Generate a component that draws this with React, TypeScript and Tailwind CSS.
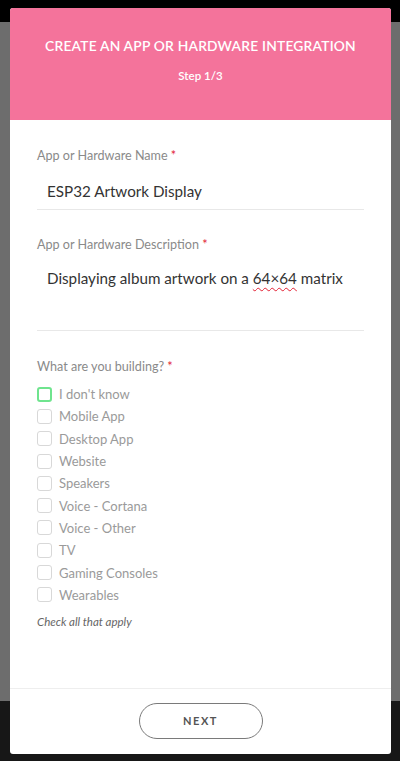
import React from "react";

const OPTIONS = [
  "I don't know",
  "Mobile App",
  "Desktop App",
  "Website",
  "Speakers",
  "Voice - Cortana",
  "Voice - Other",
  "TV",
  "Gaming Consoles",
  "Wearables",
];

function Label({ children }: { children: React.ReactNode }) {
  return (
    <div className="text-[12.6px] leading-[16px] text-[#8a8a8a]">
      {children} <span className="text-[#e22134]">*</span>
    </div>
  );
}

export default function App() {
  return (
    <div
      className="relative h-[761px] w-[400px] overflow-hidden bg-[#171717]"
      style={{ fontFamily: "Lato, 'Noto Sans', sans-serif" }}
    >
      {/* page behind the modal */}
      <div className="h-[22px] bg-black" />
      <div className="h-[679px] bg-[#6d6d6d]" />

      {/* modal */}
      <div className="absolute left-[10px] top-[8px] flex h-[746px] w-[381px] flex-col overflow-hidden rounded-[3px] bg-white">
        <div className="flex h-[112px] flex-col items-center bg-[#f4739b] pt-[30px] text-white">
          <h1 className="text-[13.8px] font-semibold leading-[16px] tracking-[0.2px]">
            CREATE AN APP OR HARDWARE INTEGRATION
          </h1>
          <p className="mt-[15px] text-[11.5px] font-semibold leading-[14px]">Step 1/3</p>
        </div>

        <div className="flex-1 px-[27px] pt-[28px]">
          <Label>App or Hardware Name</Label>
          <div className="mt-[17px] border-b border-[#e8e8e8] pb-[8px] pl-[10px] text-[15.2px] leading-[20px] text-[#333]">
            ESP32 Artwork Display
          </div>

          <div className="mt-[27px]">
            <Label>App or Hardware Description</Label>
          </div>
          <div className="mt-[14px] h-[64px] border-b border-[#e8e8e8] pl-[10px] pt-[1px] text-[15.2px] leading-[20px] text-[#333]">
            Displaying album artwork on a{" "}
            <span className="underline decoration-[#e22134] decoration-wavy decoration-1 underline-offset-[3px]">
              64×64
            </span>{" "}
            matrix
          </div>

          <div className="mt-[28px]">
            <Label>What are you building?</Label>
          </div>
          <ul className="mt-[8px] flex flex-col">
            {OPTIONS.map((o, i) => (
              <li key={o} className="flex h-[22.3px] items-center gap-[7px]">
                <span
                  className={
                    i === 0
                      ? "h-[15px] w-[15px] rounded-[3px] border-2 border-[#6fe48e]"
                      : "h-[15px] w-[15px] rounded-[3px] border border-[#d8d8d8]"
                  }
                />
                <span className="text-[13px] leading-[16px] text-[#9a9a9a]">{o}</span>
              </li>
            ))}
          </ul>
          <p className="mt-[9px] text-[11.5px] italic leading-[14px] text-[#666]">
            Check all that apply
          </p>
        </div>

        <div className="flex h-[66px] items-start justify-center border-t border-[#eeeeee] pt-[14px]">
          <button
            type="button"
            className="h-[36px] w-[124px] rounded-full border-[1.5px] border-[#7a7a7a] text-[11px] font-bold tracking-[1.5px] text-[#555]"
          >
            NEXT
          </button>
        </div>
      </div>
    </div>
  );
}
